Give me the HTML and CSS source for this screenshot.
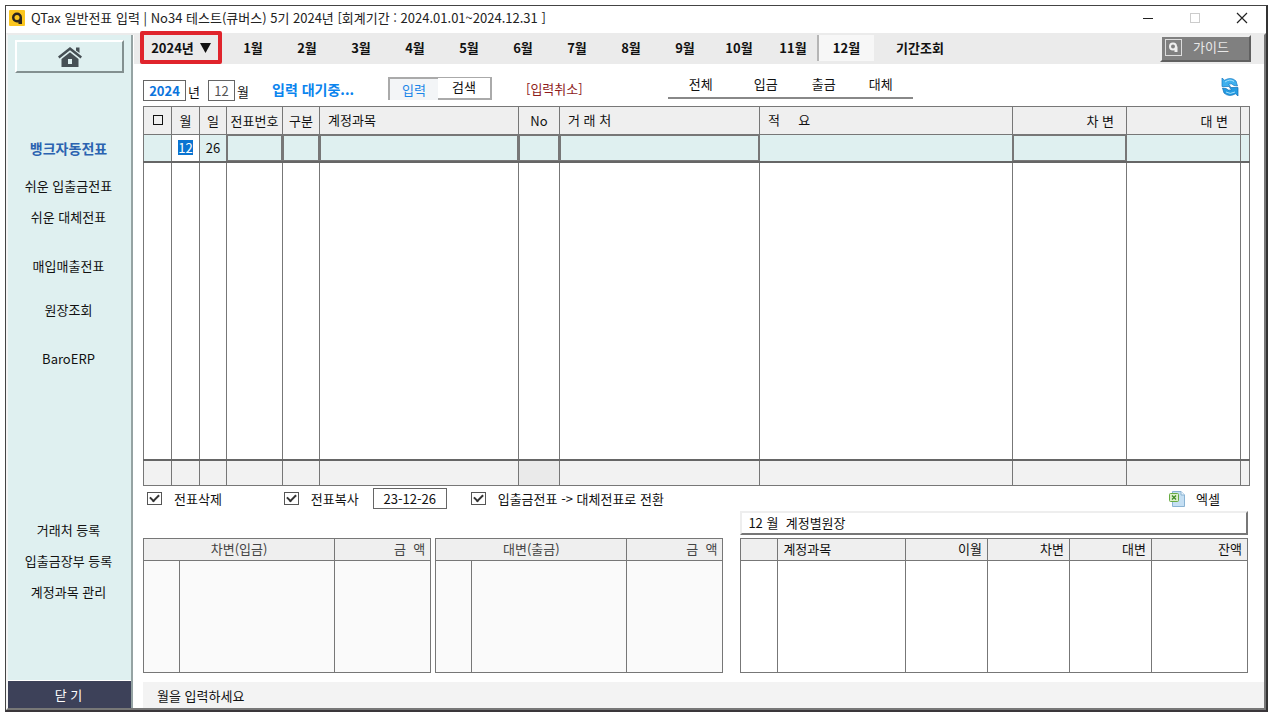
FILE: index.html
```html
<!DOCTYPE html>
<html lang="ko">
<head>
<meta charset="utf-8">
<title>QTax 일반전표 입력</title>
<link rel="stylesheet" href="styles.css">
</head>
<body>
<div class="window">
  <header class="titlebar">
    <svg class="app-logo" viewBox="0 0 16 16"><rect width="16" height="16" rx="1" fill="#fbc620"/><path d="M13 14V7.500A5 5 0 1 0 8 12.500H9.500V14Z" fill="#2b2520"/><circle cx="8" cy="7.500" r="2.500" fill="#fbc620"/></svg>
    <h1 class="title">QTax 일반전표 입력 | No34 테스트(큐버스) 5기 2024년 [회계기간 : 2024.01.01~2024.12.31 ]</h1>
    <div class="window-buttons">
      <button class="win-btn" aria-label="최소화"><svg viewBox="0 0 12 12"><path d="M1 6.500H11" stroke="#222" fill="none"/></svg></button>
      <button class="win-btn" aria-label="최대화" disabled><svg viewBox="0 0 12 12"><rect x="1.500" y="1.500" width="9" height="9" stroke="#ccc" fill="none"/></svg></button>
      <button class="win-btn" aria-label="닫기"><svg viewBox="0 0 12 12"><path d="M1 1L11 11M11 1L1 11" stroke="#222" fill="none" stroke-width="1.200"/></svg></button>
    </div>
  </header>
  <div class="body">
    <aside class="sidebar">
      <button class="home" aria-label="홈"><svg viewBox="0 0 24 20"><path d="M12 0L24 9.500L22.500 11.500L12 3.300L1.500 11.500L0 9.500Z" fill="#464f54"/><path d="M18 .5H21.500V6L18 3.500Z" fill="#464f54"/><path d="M3.500 12L12 5.300L20.500 12V20H3.500Z" fill="#464f54"/><path d="M10 12H14V17H10Z" fill="#dff0f0"/></svg></button>
      <nav class="side-nav">
        <a class="side-link strong" href="#">뱅크자동전표</a>
        <a class="side-link gap-s" href="#">쉬운 입출금전표</a>
        <a class="side-link" href="#">쉬운 대체전표</a>
        <a class="side-link gap-l" href="#">매입매출전표</a>
        <a class="side-link gap-m" href="#">원장조회</a>
        <a class="side-link gap-l" href="#">BaroERP</a>
      </nav>
      <nav class="side-nav side-bottom">
        <a class="side-link" href="#">거래처 등록</a>
        <a class="side-link" href="#">입출금장부 등록</a>
        <a class="side-link" href="#">계정과목 관리</a>
      </nav>
      <button class="close">닫 기</button>
    </aside>
    <main class="main">
      <div class="tabs">
        <button class="year">2024년<svg viewBox="0 0 11 10"><path d="M0 0H11L5.500 10Z" fill="#111"/></svg></button>
        <button class="tab">1월</button><button class="tab">2월</button><button class="tab">3월</button><button class="tab">4월</button><button class="tab">5월</button><button class="tab">6월</button><button class="tab">7월</button><button class="tab">8월</button><button class="tab">9월</button><button class="tab">10월</button><button class="tab">11월</button><button class="tab selected">12월</button><button class="tab period">기간조회</button>
        <button class="guide"><svg viewBox="0 0 17 17"><rect x=".5" y=".5" width="16" height="16" fill="none" stroke="#ddd"/><circle cx="8" cy="7.500" r="3" fill="none" stroke="#eee" stroke-width="2"/><path d="M10 7.500H12.500V13H9.500V11Z" fill="#eee"/></svg><span>가이드</span></button>
      </div>
      <div class="filters">
        <input class="box year-in" id="fy" value="2024"><label class="unit" for="fy">년</label>
        <input class="box month-in" id="fm" value="12"><label class="unit" for="fm">월</label>
        <strong class="waiting">입력 대기중...</strong>
        <div class="toggle"><button class="on">입력</button><button>검색</button></div>
        <button class="cancel">[입력취소]</button>
        <nav class="kinds"><a href="#">전체</a><a href="#">입금</a><a href="#">출금</a><a href="#">대체</a></nav>
        <button class="refresh" aria-label="새로고침"><svg viewBox="0 0 18 18"><path d="M1 0L3.500 2.200Q10-1.500 15 3L16.500 8L13 7.500Q10.500 4.800 7.500 6.200L9.500 8.500H1Z" fill="#3fb0ee" stroke="#1279c4" stroke-width=".7"/><path d="M17 18L14.500 15.800Q8 19.500 3 15L1.500 10L5 10.500Q7.500 13.200 10.500 11.800L8.500 9.500H17Z" fill="#249be2" stroke="#0f6fb8" stroke-width=".7"/><path d="M4 4Q9 .5 13 3.500M5 14Q9 16.800 14 14" stroke="#a5e0fb" fill="none"/></svg></button>
      </div>
      <table class="grid vouchers">
        <colgroup><col class="w28"><col class="w28"><col class="w27"><col class="w56"><col class="w37"><col class="w199"><col class="w41"><col class="w200"><col><col class="w114"><col class="w114"><col class="w9"></colgroup>
        <thead><tr><th><input type="checkbox" class="square" aria-label="전체 선택"></th><th class="c">월</th><th class="c">일</th><th class="c">전표번호</th><th class="c">구분</th><th>계정과목</th><th class="c">No</th><th>거 래 처</th><th class="pre">적     요</th><th class="r">차 변</th><th class="r">대 변</th><th></th></tr></thead>
        <tbody>
          <tr class="current"><td></td><td class="editing"><input class="selection" aria-label="월" value="12"></td><td class="c">26</td><td class="framed"></td><td class="framed"></td><td class="framed"></td><td class="framed"></td><td class="framed"></td><td></td><td class="framed"></td><td></td><td></td></tr>
          <tr class="blank"><td></td><td></td><td></td><td></td><td></td><td></td><td></td><td></td><td></td><td></td><td></td><td></td></tr>
        </tbody>
        <tfoot><tr><td></td><td></td><td></td><td></td><td></td><td></td><td class="dim"></td><td></td><td></td><td></td><td></td><td></td></tr></tfoot>
      </table>
      <div class="actions">
        <label class="check"><input type="checkbox" checked>전표삭제</label>
        <label class="check copy"><input type="checkbox" checked>전표복사</label>
        <input class="box date-in" aria-label="복사 일자" value="23-12-26">
        <label class="check convert"><input type="checkbox" checked>입출금전표 -&gt; 대체전표로 전환</label>
        <button class="excel"><svg viewBox="0 0 16 16"><path d="M3.500 .5H12L15.500 4V15.500H3.500Z" fill="#c5dff3" stroke="#8ab3d3"/><path d="M12 .5V4H15.500" fill="#eef7fd" stroke="#8ab3d3"/><rect x=".5" y="2.500" width="9" height="8" rx="1" fill="#dcefcb" stroke="#68ab42"/><path d="M3 4.500L7 8.500M7 4.500L3 8.500" stroke="#3d8a27" stroke-width="1.300"/></svg>엑셀</button>
      </div>
      <div class="lower">
        <table class="grid side">
          <colgroup><col class="w36"><col><col class="w96"></colgroup>
          <thead><tr><th colspan="2" class="c">차변(입금)</th><th class="r pre">금  액</th></tr></thead>
          <tbody><tr><td></td><td></td><td></td></tr></tbody>
        </table>
        <table class="grid side">
          <colgroup><col class="w36"><col><col class="w96"></colgroup>
          <thead><tr><th colspan="2" class="c">대변(출금)</th><th class="r pre">금  액</th></tr></thead>
          <tbody><tr><td></td><td></td><td></td></tr></tbody>
        </table>
        <section class="ledger">
          <h2 class="ledger-title">12 월&nbsp; 계정별원장</h2>
          <table class="grid">
            <colgroup><col class="w37"><col><col class="w82"><col class="w82"><col class="w82"><col class="w96"></colgroup>
            <thead><tr><th></th><th>계정과목</th><th class="r">이월</th><th class="r">차변</th><th class="r">대변</th><th class="r">잔액</th></tr></thead>
            <tbody><tr><td></td><td></td><td></td><td></td><td></td><td></td></tr></tbody>
          </table>
        </section>
      </div>
      <footer class="status">월을 입력하세요</footer>
    </main>
  </div>
</div>
</body>
</html>
```
FILE: styles.css
```css
* { box-sizing: border-box; }
body {
  margin: 0;
  padding: 5px 4px 3px 5px;
  background: #fff;
  color: #111;
  font: 13px/16px "Noto Sans CJK KR", sans-serif;
}
button, input { font: inherit; color: inherit; margin: 0; padding: 0; border: 0; background: none; border-radius: 0; }
a { color: inherit; text-decoration: none; }
svg { display: block; }
.window {
  display: flex;
  flex-direction: column;
  min-height: calc(100vh - 8px);
  border: 1px solid #444;
  border-right: 2px solid #333;
  border-bottom: 2px solid #3a363a;
}
.titlebar { display: flex; align-items: center; height: 27px; padding: 0 0 3px 3px; }
.app-logo { width: 16px; height: 16px; }
.title { margin: 0 auto 0 6px; font-size: 13px; font-weight: 400; color: #222; white-space: pre; }
.window-buttons { display: flex; padding-right: 1px; }
.win-btn { width: 47px; height: 24px; display: grid; place-items: center; }
.win-btn svg { width: 12px; height: 12px; }
.body { flex: 1; display: flex; border: 2px solid; border-color: #ebebeb #777 #777 #f4f4f4; }
.sidebar {
  display: flex;
  flex-direction: column;
  width: 125px;
  flex: none;
  background: #dff0f0;
  border-right: 2px solid #95a3a3;
}
.home {
  display: grid;
  place-items: center;
  height: 33px;
  margin: 5px 7px 0;
  border: 2px solid;
  border-color: #fff #839090 #839090 #fff;
}
.home svg { width: 24px; height: 20px; }
.side-nav { display: flex; flex-direction: column; padding: 60px 2px 0 0; }
.side-bottom { margin-top: auto; padding: 0 2px 73px 0; }
.side-link { height: 31px; line-height: 31px; text-align: center; white-space: nowrap; }
.side-link.strong { color: #2b63b0; font-size: 14px; font-weight: 700; }
.gap-s { margin-top: 6px; }
.gap-m { margin-top: 13px; }
.gap-l { margin-top: 18px; }
.close { height: 28px; padding-right: 2px; background: #3d4159; color: #fff; border-top: 1px solid #fff; }
.main { flex: 1; min-width: 0; display: flex; flex-direction: column; padding-left: 10px; }
.tabs { display: flex; height: 29px; background: #ebebeb; margin-left: -9px; padding-left: 6px; }
.year {
  position: relative;
  display: flex;
  align-items: center;
  justify-content: center;
  gap: 6px;
  width: 82px;
  padding-bottom: 4px;
  font-weight: 700;
}
.year svg { width: 11px; height: 10px; }
.year::after { content: ""; position: absolute; inset: -4px 0 0; border: 4px solid #e0242c; border-radius: 2px; }
.tabs .tab { width: 54px; height: 26px; padding-bottom: 1px; font-weight: 700; }
.tabs .year + .tab { margin-left: 4px; }
.tabs .selected { width: 57px; margin-left: -3px; background: #f7f7f7; border-left: 2px solid #b5b5b5; }
.tabs .period { width: 92px; }
.guide {
  display: flex;
  align-items: center;
  gap: 11px;
  width: 91px;
  height: 27px;
  margin: 0 13px 0 auto;
  padding: 0 0 3px 3px;
  background: #808080;
  color: #e8e8e8;
  border: 2px solid;
  border-color: #eee #606060 #606060 #eee;
}
.guide svg { width: 17px; height: 17px; }
.filters { display: flex; height: 42px; padding-top: 12px; align-items: flex-start; }
.box { height: 21px; border: 1px solid #666; background: #fff; text-align: center; }
.filters .box { margin-top: 4px; }
.year-in { width: 43px; color: #0a74dd; font-weight: 700; }
.month-in { width: 27px; margin-left: 7px; color: #555; }
.unit { width: 15px; padding: 8px 0 0 2px; }
.month-in + .unit { padding-left: 2px; }
.waiting { width: 100px; margin-left: 22px; padding-top: 5px; color: #0a84ee; font-size: 14px; white-space: nowrap; }
.toggle { display: flex; width: 104px; height: 23px; margin: 1px 0 0 16px; }
.toggle button { width: 54px; padding-bottom: 2px; background: #fff; border: solid #aaa; border-width: 1px 2px 2px 0; }
.toggle .on { width: 50px; padding-bottom: 0; background: #f3f5f7; color: #1a86e8; border-width: 2px 0 0 2px; }
.cancel { margin: 5px 0 0 34px; color: #8e1c1c; }
.kinds { display: flex; width: 245px; height: 22px; margin: 1px 0 0 85px; border-bottom: 2px solid #888; padding-left: 1px; }
.kinds a { width: 58px; text-align: center; line-height: 14px; }
.kinds a:first-child { width: 64px; }
.kinds a:nth-child(2) { width: 66px; }
.kinds a:nth-child(3) { width: 50px; }
.kinds a:nth-child(4) { width: 64px; }
.refresh { margin: 2px 25px 0 auto; }
.refresh svg { width: 18px; height: 18px; }
.grid { border-collapse: collapse; table-layout: fixed; width: 100%; }
.grid th, .grid td { border: 1px solid #777; padding: 0; overflow: hidden; white-space: nowrap; }
.grid th { background: #efefef; font-weight: 400; text-align: left; padding: 0 0 0 8px; }
.grid th.c, .grid td.c { text-align: center; padding: 0; }
.grid th.r { text-align: right; padding: 0 12px 0 0; }
.grid .pre { white-space: pre; }
.vouchers { width: calc(100% - 14px); }
.vouchers thead tr { height: 28px; }
.vouchers thead th { padding-bottom: 2px; }
.vouchers .current { height: 27px; }
.vouchers .blank { height: calc(100vh - 417px); }
.vouchers tfoot tr { height: 26px; }
.vouchers tfoot td { background: #f2f2f2; border-top: 2px solid #666; }
.vouchers tfoot .dim { background: #eaeaea; }
.current td { background: #dff0f0; border-bottom: 2px solid #666; }
.current .framed { box-shadow: inset 0 0 0 1px #777; }
.current .editing { background: #fff; text-align: center; }
.selection { width: 15px; height: 15px; background: #0a74d1; color: #fff; text-align: center; line-height: 15px; }
.square { appearance: none; display: block; width: 10px; height: 10px; border: 1px solid #111; margin-left: 1px; }
.w9 { width: 9px; } .w27 { width: 27px; } .w28 { width: 28px; } .w36 { width: 36px; } .w37 { width: 37px; }
.w41 { width: 41px; } .w56 { width: 56px; } .w82 { width: 82px; } .w96 { width: 96px; }
.w114 { width: 114px; } .w199 { width: 199px; } .w200 { width: 200px; }
.actions { display: flex; height: 25px; align-items: center; padding-left: 4px; }
.check { display: flex; align-items: center; gap: 12px; white-space: nowrap; }
.check input {
  appearance: none;
  width: 15px;
  height: 13px;
  border: 1px solid #555;
  display: grid;
  place-items: center;
}
.check input:checked::before { content: ""; width: 7px; height: 4px; border: solid #333; border-width: 0 0 2px 2px; transform: rotate(-45deg); margin-bottom: 3px; }
.copy { margin-left: 62px; }
.date-in { width: 74px; margin-left: 14px; }
.convert { margin-left: 24px; }
.excel { display: flex; align-items: center; gap: 11px; margin: 0 44px 0 auto; }
.excel svg { width: 16px; height: 16px; }
.lower { display: flex; align-items: flex-end; gap: 4px; padding-right: 16px; }
.lower .side { flex: 288; min-width: 0; width: 0; background: #fafafa; }
.lower .side th { color: #444; }
.ledger { flex: 509; min-width: 0; margin-left: 13px; }
.ledger-title {
  margin: 0 0 3px;
  padding: 0 6px;
  height: 24px;
  line-height: 19px;
  font-size: 13px;
  font-weight: 400;
  border: 2px solid;
  border-color: #eee #777 #777 #eee;
}
.lower thead tr { height: 22px; }
.lower tbody tr { height: 112px; }
.lower .grid th { padding: 0 0 2px 5px; }
.lower .grid th.c { padding-left: 0; }
.lower .grid th.r { padding-right: 5px; }
.status { margin-top: 9px; height: 26px; padding: 6px 14px 0; background: #f3f3f3; }
```
